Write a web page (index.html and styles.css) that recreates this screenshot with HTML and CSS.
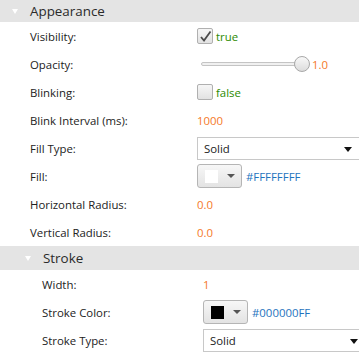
FILE: index.html
```html
<!DOCTYPE html>
<html lang="en">
<head>
    <meta charset="UTF-8">
    <title>Properties</title>
    <link rel="stylesheet" href="styles.css">
</head>
<body>
    <div class="panel">
        <div class="section-head">
            <span class="caret"></span>
            <span class="section-title">Appearance</span>
        </div>
        <div class="rows">
            <div class="label">Visibility:</div>
            <div class="value">
                <span class="check">
                    <svg width="13" height="13" viewBox="0 0 13 13"><path d="M2 7 L5 10.5 L11.5 1.5" fill="none" stroke="#4a4a4a" stroke-width="1.8"/></svg>
                </span>
                <span class="bool">true</span>
            </div>

            <div class="label">Opacity:</div>
            <div class="value">
                <div class="slider"><div class="track"></div><div class="thumb"></div></div>
                <span class="num">1.0</span>
            </div>

            <div class="label">Blinking:</div>
            <div class="value"><span class="check"></span><span class="bool">false</span></div>

            <div class="label">Blink Interval (ms):</div>
            <div class="value"><span class="num">1000</span></div>

            <div class="label">Fill Type:</div>
            <div class="value"><div class="select">Solid<span class="arrow"></span></div></div>

            <div class="label">Fill:</div>
            <div class="value">
                <div class="color-btn"><span class="swatch white"></span><span class="mini-arrow"></span></div>
                <span class="hex">#FFFFFFFF</span>
            </div>

            <div class="label">Horizontal Radius:</div>
            <div class="value"><span class="num">0.0</span></div>

            <div class="label">Vertical Radius:</div>
            <div class="value"><span class="num">0.0</span></div>
        </div>

        <div class="section-head sub">
            <span class="caret"></span>
            <span class="section-title">Stroke</span>
        </div>
        <div class="rows sub-rows">
            <div class="label">Width:</div>
            <div class="value"><span class="num">1</span></div>

            <div class="label">Stroke Color:</div>
            <div class="value">
                <div class="color-btn"><span class="swatch black"></span><span class="mini-arrow"></span></div>
                <span class="hex">#000000FF</span>
            </div>

            <div class="label">Stroke Type:</div>
            <div class="value"><div class="select">Solid<span class="arrow"></span></div></div>
        </div>
    </div>
</body>
</html>
```

FILE: styles.css
```css
* {
    box-sizing: border-box;
    margin: 0;
    padding: 0;
}

body {
    font-family: "Open Sans", "Noto Sans", sans-serif;
    font-size: 11.4px;
    color: #222;
    background-color: #fff;
    overflow: hidden;
}

.panel {
    width: 359px;
}

.section-head {
    height: 22px;
    background-color: #e4e4e4;
    display: flex;
    align-items: center;
    padding-left: 12px;
}

.section-head.sub {
    height: 24px;
    padding-left: 25px;
}

.caret {
    width: 0;
    height: 0;
    border-left: 3px solid transparent;
    border-right: 3px solid transparent;
    border-top: 5px solid #fff;
    margin-right: 12px;
}

.section-title {
    font-size: 13.4px;
    color: #2a2a2a;
}

.rows {
    display: grid;
    grid-template-columns: 167px 1fr;
    grid-auto-rows: 28px;
    padding-left: 30px;
}

.sub-rows {
    grid-template-columns: 161px 1fr;
    padding-left: 42px;
}

.label,
.value {
    display: flex;
    align-items: center;
}

.value {
    white-space: nowrap;
}

.check {
    width: 16px;
    height: 16px;
    border: 1px solid #b0b0b0;
    border-radius: 2px;
    background: linear-gradient(#f6f6f6, #e2e2e2);
    margin-right: 3px;
    display: flex;
    align-items: center;
    justify-content: center;
}

.bool {
    color: #2b8a00;
}

.num {
    color: #f5792a;
}

.hex {
    color: #1e73be;
    margin-left: 4px;
}

.slider {
    position: relative;
    width: 113px;
    height: 16px;
    margin-right: 2px;
}

.track {
    position: absolute;
    left: 4px;
    right: 6px;
    top: 6px;
    height: 4px;
    border: 1px solid #c4c4c4;
    border-radius: 2px;
    background-color: #f0f0f0;
}

.thumb {
    position: absolute;
    right: 0;
    top: 0;
    width: 16px;
    height: 16px;
    border-radius: 50%;
    border: 1px solid #a8a8a8;
    background: linear-gradient(#f8f8f8, #dcdcdc);
}

.select {
    width: 170px;
    height: 23px;
    border: 1px solid #c8c8c8;
    background-color: #fff;
    display: flex;
    align-items: center;
    padding-left: 6px;
    position: relative;
}

.arrow {
    position: absolute;
    left: 146px;
    top: 9px;
    border-left: 4px solid transparent;
    border-right: 4px solid transparent;
    border-top: 5px solid #111;
}

.color-btn {
    width: 45px;
    height: 24px;
    border: 1px solid #b5b5b5;
    border-radius: 3px;
    background: linear-gradient(#f7f7f7, #e3e3e3);
    display: flex;
    align-items: center;
    padding-left: 7px;
}

.swatch {
    width: 13px;
    height: 13px;
}

.swatch.white {
    background-color: #fff;
}

.swatch.black {
    background-color: #000;
}

.mini-arrow {
    margin-left: 9px;
    border-left: 4px solid transparent;
    border-right: 4px solid transparent;
    border-top: 4px solid #555;
}
```
